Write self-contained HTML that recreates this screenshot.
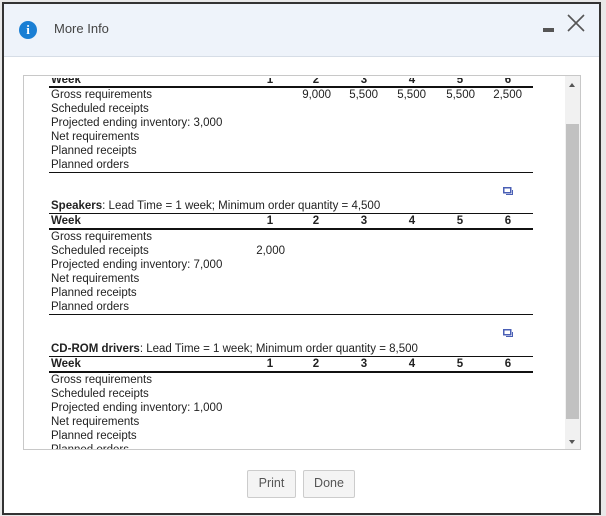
<!DOCTYPE html>
<html><head><style>
*{margin:0;padding:0;box-sizing:border-box}
body{width:606px;height:516px;background:#e8e8e8;position:relative;overflow:hidden;font-family:"Liberation Sans",Arial,sans-serif;color:#222}
#dlg{position:absolute;left:2px;top:2px;width:599px;height:513px;border:2px solid #333;background:#fff;overflow:hidden}
#hdr{position:absolute;left:0;top:0;width:100%;height:53px;background:#eef3fa;border-bottom:1px solid #d6dde6}
.t{position:absolute;font-size:11.5px;line-height:14px;white-space:nowrap}
.b{font-weight:bold}
.ln{position:absolute;left:49px;width:484px;background:#111}
.r{text-align:right;width:40px}
.c{text-align:center;width:20px}
#box{position:absolute;left:19px;top:71px;width:558px;height:375px;border:1px solid #c8c8c8;overflow:hidden}
.btn{position:absolute;top:470px;height:28px;border:1px solid #ccc;background:#f4f4f4;border-radius:2px;font-size:12.5px;color:#555;text-align:center;line-height:25px}
</style></head><body>
<div id="dlg">
<div id="hdr">
 <div style="position:absolute;left:15px;top:17px;width:18px;height:18px;border-radius:50%;background:#1a7fd4;color:#fff;font:bold 13px 'Liberation Serif',serif;text-align:center;line-height:18px">i</div>
 <div style="position:absolute;left:50px;top:17px;font-size:13px;color:#444">More Info</div>
 <div style="position:absolute;left:539px;top:24px;width:11px;height:4px;background:#555"></div>
 <svg style="position:absolute;left:563px;top:10px" width="18" height="18" viewBox="0 0 18 18"><path d="M1 1L17 17M17 1L1 17" stroke="#555" stroke-width="1.6" fill="none"/></svg>
</div>
<div id="box">
 <div style="position:absolute;left:541px;top:0;width:15px;height:373px;background:#f1f1f1"></div>
 <div style="position:absolute;left:542px;top:48px;width:13px;height:295px;background:#c1c1c1"></div>
 <div style="position:absolute;left:545px;top:7px;border:3.5px solid transparent;border-bottom:4px solid #555;border-top:0"></div>
 <div style="position:absolute;left:545px;top:364px;border:3.5px solid transparent;border-top:4px solid #555;border-bottom:0"></div>
</div>
</div>
<div style="position:absolute;left:24px;top:78px;width:538px;height:371px;overflow:hidden">
<div style="position:absolute;left:-24px;top:-78px;width:606px;height:460px">
<div class="t b" style="left:51px;top:73px">Week</div>
<div class="t b c" style="left:260px;top:73px">1</div><div class="t b c" style="left:306px;top:73px">2</div><div class="t b c" style="left:354px;top:73px">3</div><div class="t b c" style="left:402px;top:73px">4</div><div class="t b c" style="left:450px;top:73px">5</div><div class="t b c" style="left:498px;top:73px">6</div>
<div class="ln" style="top:86px;height:2px"></div>
<div class="t" style="left:51px;top:88px">Gross requirements</div>
<div class="t r" style="left:291px;top:88px">9,000</div><div class="t r" style="left:338px;top:88px">5,500</div><div class="t r" style="left:386px;top:88px">5,500</div><div class="t r" style="left:435px;top:88px">5,500</div><div class="t r" style="left:482px;top:88px">2,500</div>
<div class="t" style="left:51px;top:102px">Scheduled receipts</div>
<div class="t" style="left:51px;top:116px">Projected ending inventory: 3,000</div>
<div class="t" style="left:51px;top:130px">Net requirements</div>
<div class="t" style="left:51px;top:144px">Planned receipts</div>
<div class="t" style="left:51px;top:158px">Planned orders</div>
<div class="ln" style="top:172px;height:1px"></div>
<svg style="position:absolute;left:503px;top:187px" width="10" height="9"><rect x="0.75" y="0.75" width="7" height="5" fill="none" stroke="#4a5fb5" stroke-width="1.5"/><path d="M3 7.5H9.5V3" stroke="#4a5fb5" fill="none"/></svg>
<div class="t" style="left:51px;top:199px"><b>Speakers</b>: Lead Time = 1 week; Minimum order quantity = 4,500</div>
<div class="ln" style="top:213px;height:1px"></div>
<div class="t b" style="left:51px;top:214px">Week</div>
<div class="t b c" style="left:260px;top:214px">1</div><div class="t b c" style="left:306px;top:214px">2</div><div class="t b c" style="left:354px;top:214px">3</div><div class="t b c" style="left:402px;top:214px">4</div><div class="t b c" style="left:450px;top:214px">5</div><div class="t b c" style="left:498px;top:214px">6</div>
<div class="ln" style="top:228px;height:2px"></div>
<div class="t" style="left:51px;top:230px">Gross requirements</div>
<div class="t" style="left:51px;top:244px">Scheduled receipts</div>
<div class="t r" style="left:245px;top:244px">2,000</div>
<div class="t" style="left:51px;top:258px">Projected ending inventory: 7,000</div>
<div class="t" style="left:51px;top:272px">Net requirements</div>
<div class="t" style="left:51px;top:286px">Planned receipts</div>
<div class="t" style="left:51px;top:300px">Planned orders</div>
<div class="ln" style="top:314px;height:1px"></div>
<svg style="position:absolute;left:503px;top:329px" width="10" height="9"><rect x="0.75" y="0.75" width="7" height="5" fill="none" stroke="#4a5fb5" stroke-width="1.5"/><path d="M3 7.5H9.5V3" stroke="#4a5fb5" fill="none"/></svg>
<div class="t" style="left:51px;top:342px"><b>CD-ROM drivers</b>: Lead Time = 1 week; Minimum order quantity = 8,500</div>
<div class="ln" style="top:356px;height:1px"></div>
<div class="t b" style="left:51px;top:357px">Week</div>
<div class="t b c" style="left:260px;top:357px">1</div><div class="t b c" style="left:306px;top:357px">2</div><div class="t b c" style="left:354px;top:357px">3</div><div class="t b c" style="left:402px;top:357px">4</div><div class="t b c" style="left:450px;top:357px">5</div><div class="t b c" style="left:498px;top:357px">6</div>
<div class="ln" style="top:371px;height:2px"></div>
<div class="t" style="left:51px;top:373px">Gross requirements</div>
<div class="t" style="left:51px;top:387px">Scheduled receipts</div>
<div class="t" style="left:51px;top:401px">Projected ending inventory: 1,000</div>
<div class="t" style="left:51px;top:415px">Net requirements</div>
<div class="t" style="left:51px;top:429px">Planned receipts</div>
<div class="t" style="left:51px;top:443px">Planned orders</div>
</div></div>
<div class="btn" style="left:247px;width:49px">Print</div>
<div class="btn" style="left:303px;width:52px">Done</div>
</body></html>
